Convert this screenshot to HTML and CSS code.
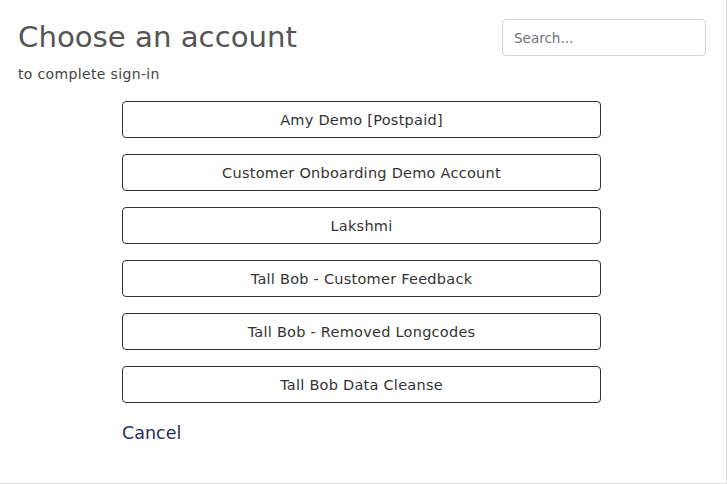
FILE: index.html
```html
<!DOCTYPE html>
<html>
<head>
<meta charset="utf-8">
<link rel="stylesheet" href="styles.css">
</head>
<body>
<div class="card">
  <div class="header">
    <div class="titles">
      <h1 class="title">Choose an account</h1>
      <p class="subtitle">to complete sign-in</p>
    </div>
    <input class="search" type="text" placeholder="Search...">
  </div>
  <div class="accounts">
    <button class="account">Amy Demo [Postpaid]</button>
    <button class="account">Customer Onboarding Demo Account</button>
    <button class="account">Lakshmi</button>
    <button class="account">Tall Bob - Customer Feedback</button>
    <button class="account">Tall Bob - Removed Longcodes</button>
    <button class="account">Tall Bob Data Cleanse</button>
    <a class="cancel" href="#">Cancel</a>
  </div>
</div>
</body>
</html>
```
FILE: styles.css
```css
html, body {
  margin: 0;
  padding: 0;
  background: #fff;
}
body {
  font-family: "DejaVu Sans", "Open Sans", sans-serif;
}
.card {
  width: 727px;
  height: 484px;
  box-sizing: border-box;
  border-right: 1px solid #dcdcdc;
  border-bottom: 1px solid #dcdcdc;
  padding: 0 20px 0 18px;
}
.header {
  display: flex;
  justify-content: space-between;
  align-items: flex-start;
  padding-top: 17px;
}
.title {
  margin: 0;
  font-size: 29.2px;
  font-weight: 400;
  line-height: 40px;
  color: #555;
}
.subtitle {
  margin: 7px 0 0;
  font-size: 14px;
  letter-spacing: 0.35px;
  line-height: 20px;
  color: #444;
}
.search {
  margin-top: 2px;
  width: 204px;
  height: 37px;
  box-sizing: border-box;
  border: 1px solid #cfd2d6;
  border-radius: 4px;
  padding: 0 11px;
  font-family: inherit;
  font-size: 13.5px;
  color: #333;
  outline: none;
}
.search::placeholder {
  color: #6f7378;
}
.accounts {
  display: flex;
  flex-direction: column;
  gap: 16px;
  width: 479px;
  margin: 17px 0 0 104px;
}
.account {
  height: 37px;
  box-sizing: border-box;
  border: 1px solid #333;
  border-radius: 4px;
  background: #fff;
  font-family: inherit;
  font-size: 14.5px;
  letter-spacing: 0.25px;
  color: #333;
  padding: 0;
}
.cancel {
  align-self: flex-start;
  margin-top: 0;
  font-size: 17.5px;
  line-height: 28px;
  color: #2c2c5b;
  text-decoration: none;
}
```
